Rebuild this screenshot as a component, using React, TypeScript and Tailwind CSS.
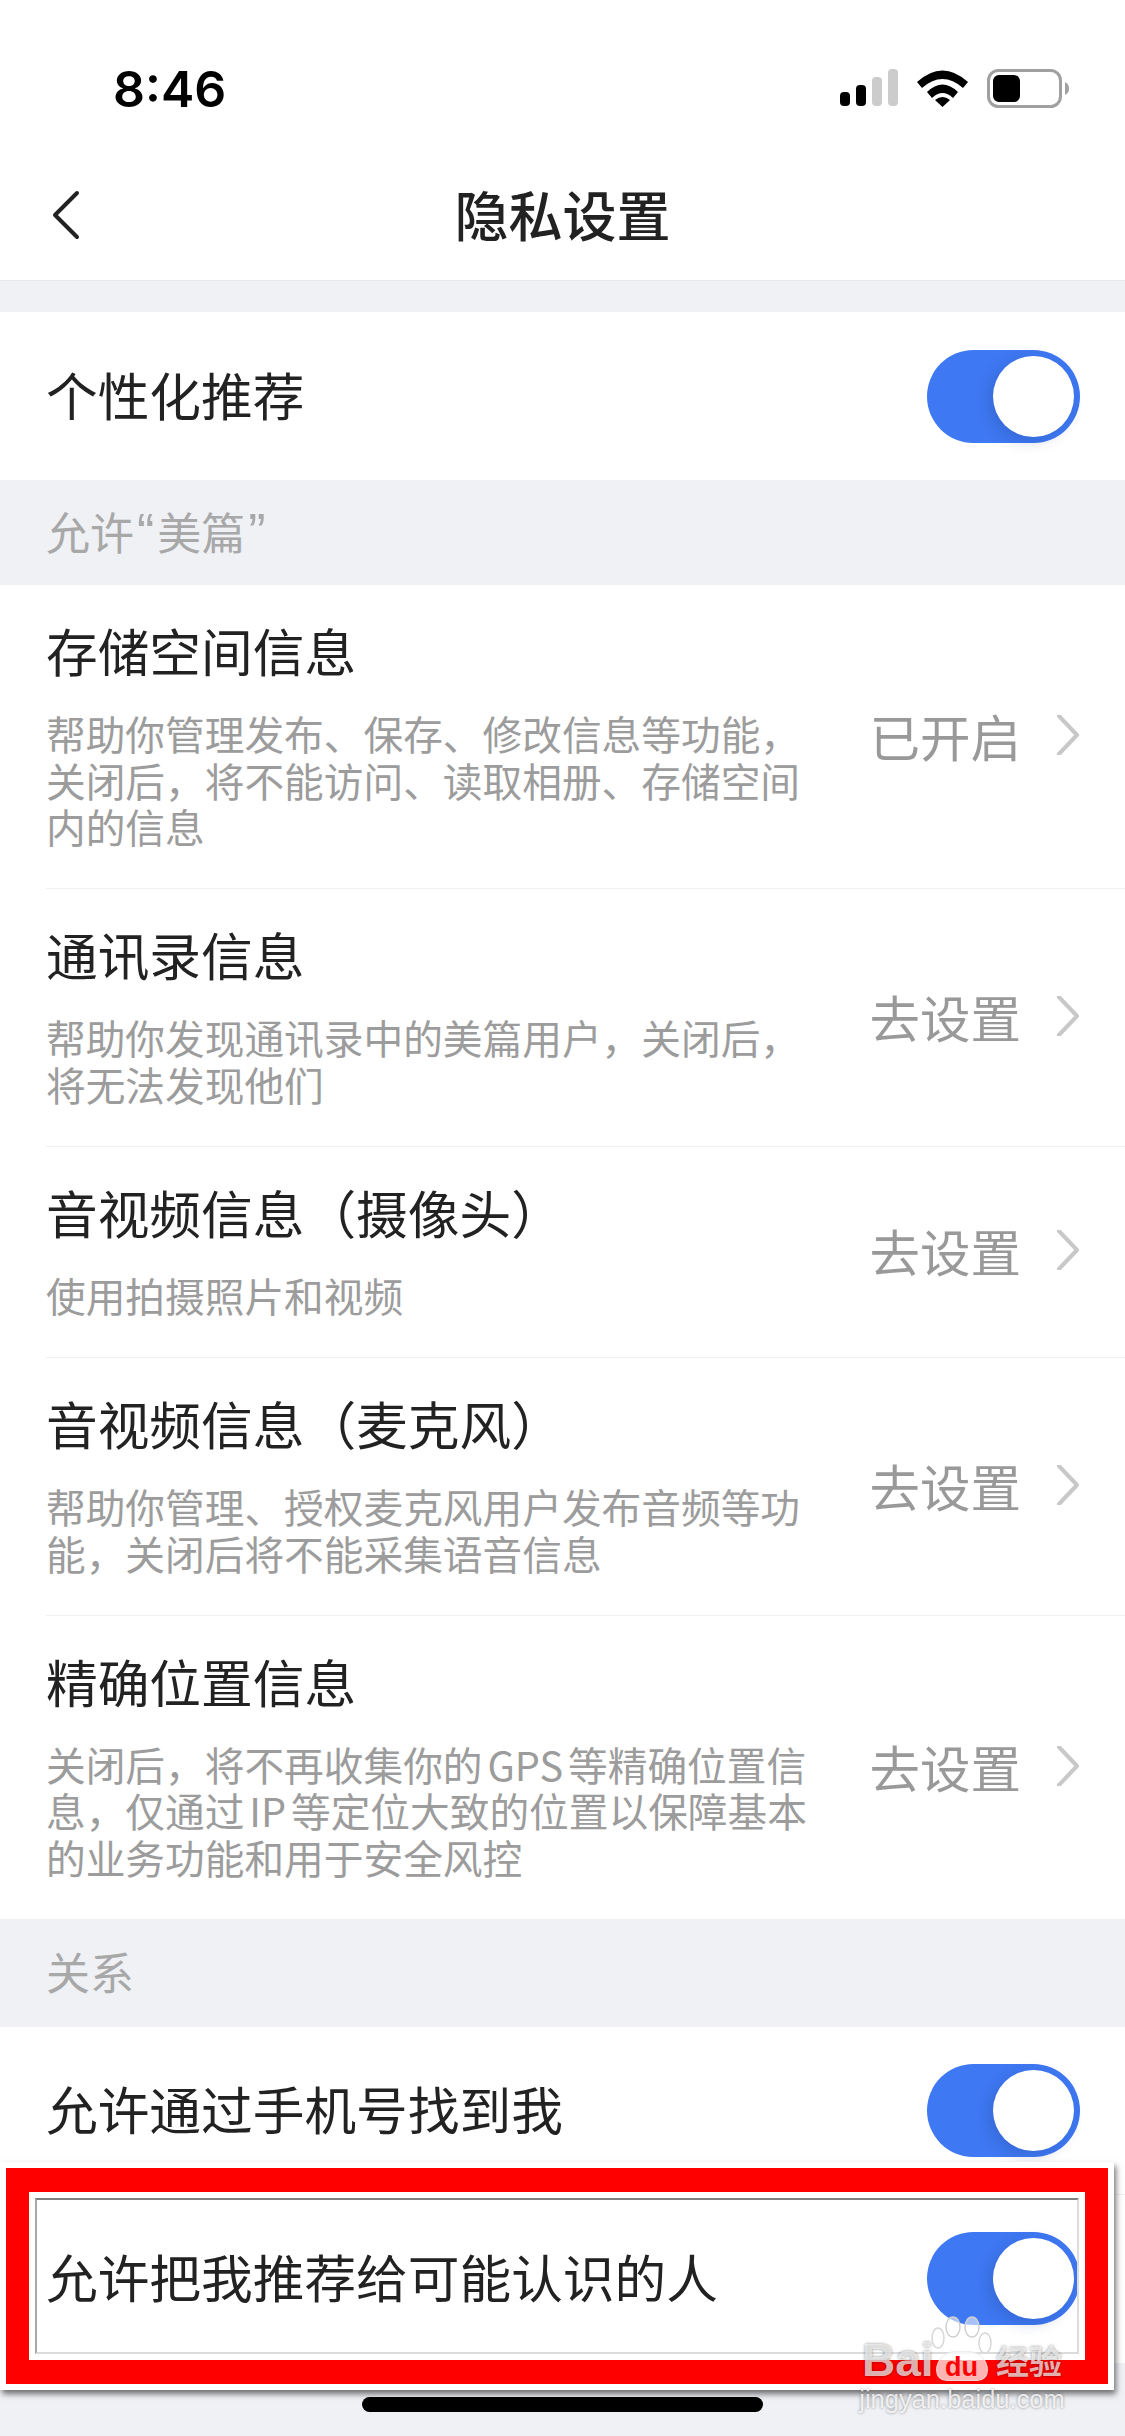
import React from 'react';

const cjk = "font-['Noto_Sans_CJK_SC','PingFang_SC',sans-serif]";

interface PermissionRow {
  title: string;
  lines: string[];
  action: string;
}

const permissions: PermissionRow[] = [
  {
    title: '存储空间信息',
    lines: ['帮助你管理发布、保存、修改信息等功能，', '关闭后，将不能访问、读取相册、存储空间', '内的信息'],
    action: '已开启',
  },
  {
    title: '通讯录信息',
    lines: ['帮助你发现通讯录中的美篇用户，关闭后，', '将无法发现他们'],
    action: '去设置',
  },
  {
    title: '音视频信息（摄像头）',
    lines: ['使用拍摄照片和视频'],
    action: '去设置',
  },
  {
    title: '音视频信息（麦克风）',
    lines: ['帮助你管理、授权麦克风用户发布音频等功', '能，关闭后将不能采集语音信息'],
    action: '去设置',
  },
  {
    title: '精确位置信息',
    lines: ['关闭后，将不再收集你的 GPS 等精确位置信', '息，仅通过 IP 等定位大致的位置以保障基本', '的业务功能和用于安全风控'],
    action: '去设置',
  },
];

const StatusIcons: React.FC = () => (
  <svg width="230" height="40" viewBox="0 0 230 40" fill="none">
    <rect x="1" y="23" width="10" height="14" rx="4" fill="#000" />
    <rect x="17" y="16" width="10" height="21" rx="4" fill="#000" />
    <rect x="33" y="8" width="10" height="29" rx="4" fill="#ccc" />
    <rect x="49" y="0" width="10" height="37" rx="4" fill="#ccc" />
    <path d="M78 13 Q103.500 -10 129 13 L124 19 Q103.500 1 83 19 Z" fill="#000" />
    <path d="M88 23 Q103.500 8 119 23 L114 29 Q103.500 19 93 29 Z" fill="#000" />
    <path d="M96 31 Q103.500 25 111 31 L103.500 38 Z" fill="#000" />
    <rect x="149.500" y="1.500" width="72" height="36" rx="10" stroke="#a0a0a0" strokeWidth="3" />
    <rect x="154" y="6" width="27" height="27" rx="6" fill="#000" />
    <path d="M226 13 Q230 15 230 19.500 Q230 24 226 26 Z" fill="#a0a0a0" />
  </svg>
);

const Toggle: React.FC = () => (
  <div className="flex h-[93px] w-[153px] items-center justify-end rounded-full bg-[#3e78f2] pr-[6px]">
    <div className="h-[81px] w-[81px] rounded-full bg-white shadow-[-4px_4px_14px_rgba(30,60,130,0.25)]" />
  </div>
);

const Chevron: React.FC = () => (
  <svg width="24" height="40" viewBox="0 0 24 40" fill="none">
    <path d="M3 1 L21 20 L3 39" stroke="#c8c8c8" strokeWidth="4" strokeLinecap="round" strokeLinejoin="round" />
  </svg>
);

const SwitchRow: React.FC<{ label: string; divider?: boolean }> = ({ label, divider }) => (
  <div className="bg-white pl-[46px]">
    <div className={`flex h-[168px] items-center justify-between pr-[45px] ${divider ? 'border-b border-[#eef0f2]' : ''}`}>
      <span className="pb-[5px] text-[51.700px] leading-[60px] text-[#222]">{label}</span>
      <Toggle />
    </div>
  </div>
);

const SectionHeader: React.FC<{ height: string; children: React.ReactNode }> = ({ height, children }) => (
  <div className={`flex items-center bg-[#f0f1f5] pb-[3px] pl-[46px] text-[44px] text-[#a8a8a8] ${height}`}>{children}</div>
);

const Quote: React.FC<{ mark: string }> = ({ mark }) => (
  <span className="mx-[3px] font-['Liberation_Sans',sans-serif] text-[52px] leading-none">{mark}</span>
);

const App: React.FC = () => {
  return (
    <div className={`relative h-[2436px] w-[1125px] overflow-hidden bg-[#f0f1f5] ${cjk}`}>
      <div className="h-[150px] bg-white pl-[113px] pr-[56px] pt-[28px]">
        <div className="flex h-full items-center justify-between">
          <span className="font-['Inter',sans-serif] text-[50px] font-semibold leading-none text-black">8:46</span>
          <StatusIcons />
        </div>
      </div>
      <div className="grid h-[131px] grid-cols-[1fr_auto_1fr] items-center border-b border-[#e9eaee] bg-white pl-[52px]">
        <svg width="28" height="50" viewBox="0 0 28 50" fill="none">
          <path d="M25 3 L3 25 L25 47" stroke="#222" strokeWidth="4" strokeLinecap="round" strokeLinejoin="round" />
        </svg>
        <span className="-ml-[52px] pb-[3px] text-[54px] font-medium leading-none text-[#222]">隐私设置</span>
        <span />
      </div>

      <div className="mt-[31px]">
        <SwitchRow label="个性化推荐" />
      </div>

      <SectionHeader height="h-[105px]">
        <span>允许<Quote mark="“" />美篇<Quote mark="”" /></span>
      </SectionHeader>

      <div className="bg-white pl-[46px]">
        {permissions.map((row, i) => (
          <div
            key={row.title}
            className={`flex items-center justify-between pb-[38.700px] pr-[45px] pt-[35px] ${
              i < permissions.length - 1 ? 'border-b border-[#eef0f2]' : ''
            }`}
          >
            <div>
              <div className="text-[51.700px] leading-[60px] text-[#222]">{row.title}</div>
              <div className="mt-[30px] text-[39.700px] leading-[46.500px] text-[#9c9c9c] [word-spacing:-4px]">
                {row.lines.map(line => (
                  <div key={line} className="whitespace-nowrap">{line}</div>
                ))}
              </div>
            </div>
            <div className="flex items-center gap-[35px]">
              <span className="text-[50.500px] leading-[60px] text-[#999]">{row.action}</span>
              <Chevron />
            </div>
          </div>
        ))}
      </div>

      <SectionHeader height="h-[108px]">关系</SectionHeader>

      <SwitchRow label="允许通过手机号找到我" divider />
      <SwitchRow label="允许把我推荐给可能认识的人" />

      <div className="absolute bottom-[24px] left-[362px] h-[15px] w-[401px] rounded-full bg-black" />

      {/* red highlight pasted over the last row */}
      <div className="absolute left-0 top-[2162px] h-[228px] w-[1114px] border-[6px] border-white shadow-[2px_4px_6px_rgba(0,0,0,0.55)]">
        <div className="h-full w-full border-x-[23px] border-y-[24px] border-[#ff0000]">
          <div className="h-full w-full border-[6px] border-white">
            <div className="h-full w-full border-[2px] border-b-[#dcdcdc] border-l-[#a8a8a8] border-r-[#dcdcdc] border-t-[#808080]" />
          </div>
        </div>
      </div>

      {/* baidu watermark */}
      <div className="absolute left-[862px] top-[2316px] flex w-[200px] flex-col items-center text-white/70 [text-shadow:0_0_3px_rgba(0,0,0,0.45)]">
        <svg width="62" height="46" viewBox="0 0 62 46" fill="none" className="-mb-[23px]">
          <ellipse cx="22" cy="11" rx="7" ry="10" stroke="#d0d0d0" strokeWidth="1.500" fill="white" fillOpacity="0.55" />
          <ellipse cx="41" cy="11" rx="7" ry="10" stroke="#d0d0d0" strokeWidth="1.500" fill="white" fillOpacity="0.55" />
          <ellipse cx="7" cy="22" rx="6" ry="10" stroke="#d8d8d8" strokeWidth="1.500" />
          <ellipse cx="54" cy="27" rx="6" ry="10" stroke="#d8d8d8" strokeWidth="1.500" />
        </svg>
        <div className="flex h-[42px] w-full items-end font-['Liberation_Sans',sans-serif] font-bold">
          <span className="text-[46px] leading-[42px]">Bai</span>
          <div className="ml-[2px] flex h-[30px] w-[52px] items-end justify-center rounded-b-[14px] rounded-t-[26px] border border-[#e2e2e2]/60 bg-white/70 text-[27px] leading-[26px] text-[#ff0000] [text-shadow:none]">du</div>
          <span className={`ml-auto text-[33px] font-bold leading-[42px] ${cjk}`}>经验</span>
        </div>
        <div className="mt-[4px] font-['Liberation_Sans',sans-serif] text-[25.500px] leading-[28px] text-white/80">jingyan.baidu.com</div>
      </div>
    </div>
  );
};

export default App;
